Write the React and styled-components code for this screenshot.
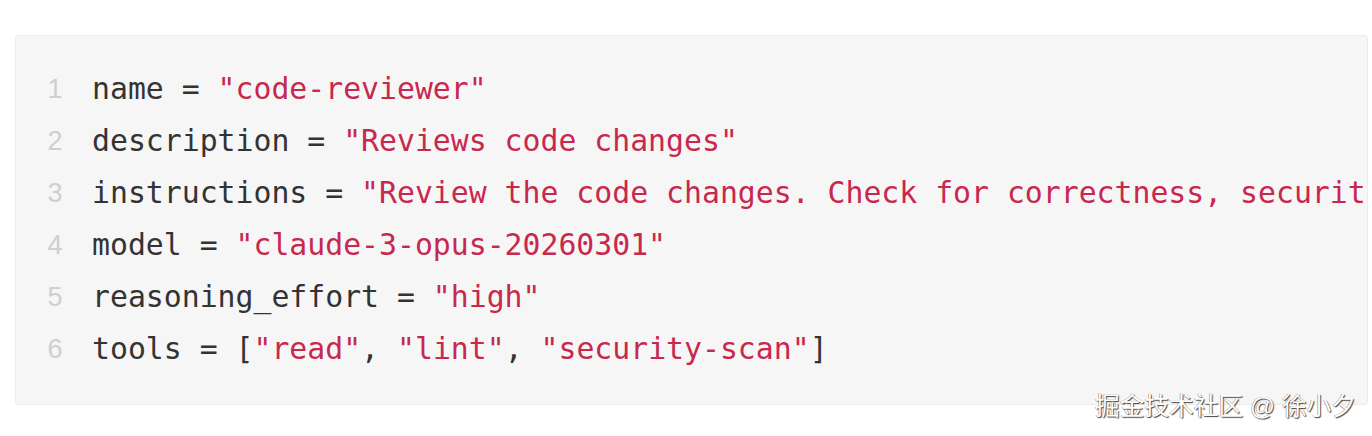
import React from 'react';
import styled, { createGlobalStyle } from 'styled-components';

const GlobalStyle = createGlobalStyle`
  html, body {
    margin: 0;
    padding: 0;
    background: #fff;
  }
`;

const Page = styled.div`
  position: relative;
  width: 1372px;
  height: 436px;
  padding: 35px 4px 0 15px;
  box-sizing: border-box;
  overflow: hidden;
`;

const CodeBox = styled.pre`
  margin: 0;
  background: #f6f6f6;
  border: 1px solid #ececec;
  border-radius: 3px;
  padding: 27px 0 29px 30px;
  overflow: hidden;
  font-family: "DejaVu Sans Mono", "Liberation Mono", monospace;
  font-size: 29.8px;
  line-height: 52px;
  color: #333;
`;

const Line = styled.div`
  display: flex;
  white-space: pre;
`;

const LineNo = styled.span`
  width: 18px;
  flex: none;
  margin-right: 28px;
  color: #cfcfcf;
  text-align: center;
  font-family: "Liberation Sans", Arial, sans-serif;
  font-size: 27px;
`;

const Code = styled.span`
  flex: none;
`;

const Str = styled.span`
  color: #c8284e;
`;

const Watermark = styled.div`
  position: absolute;
  right: 16px;
  top: 390px;
  font-family: "Liberation Sans", "Noto Sans CJK SC", sans-serif;
  font-size: 24.7px;
  line-height: 34px;
  color: #fff;
  text-shadow: 1px 1px 1px #444, -0.5px -0.5px 0 #888;
  white-space: nowrap;
`;

const lines = [
  ['name = ', '"code-reviewer"'],
  ['description = ', '"Reviews code changes"'],
  ['instructions = ', '"Review the code changes. Check for correctness, security, and style."'],
  ['model = ', '"claude-3-opus-20260301"'],
  ['reasoning_effort = ', '"high"'],
  null,
];

const App = () => {
  return (
    <Page>
      <GlobalStyle />
      <CodeBox>
        {lines.map((l, i) => (
          <Line key={i}>
            <LineNo>{i + 1}</LineNo>
            {l ? (
              <Code>
                {l[0]}
                <Str>{l[1]}</Str>
              </Code>
            ) : (
              <Code>
                tools = [<Str>"read"</Str>, <Str>"lint"</Str>, <Str>"security-scan"</Str>]
              </Code>
            )}
          </Line>
        ))}
      </CodeBox>
      <Watermark>掘金技术社区 @ 徐小夕</Watermark>
    </Page>
  );
};

export default App;
